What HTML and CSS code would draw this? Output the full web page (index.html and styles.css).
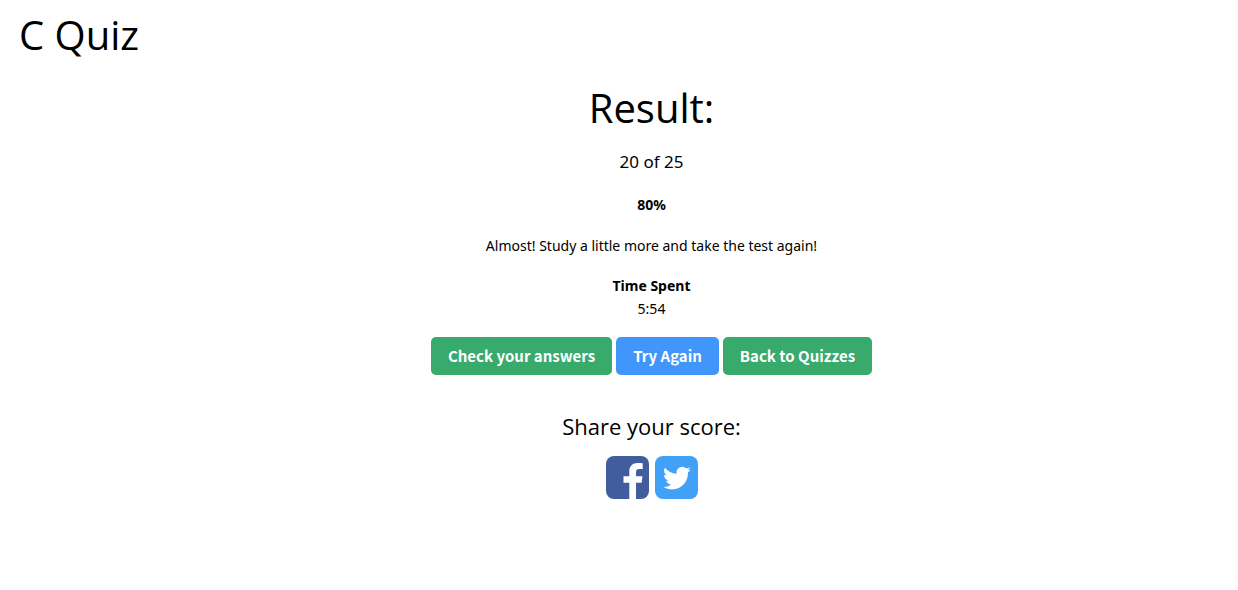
FILE: index.html
```html
<!DOCTYPE html>
<html lang="en">
<head>
<meta charset="utf-8">
<title>C Quiz</title>
<link rel="stylesheet" href="styles.css">
</head>
<body>
<h1 class="title">C Quiz</h1>
<main class="result">
  <h2 class="result-heading">Result:</h2>
  <p class="score">20 of 25</p>
  <p class="percent">80%</p>
  <p class="message">Almost! Study a little more and take the test again!</p>
  <p class="time"><strong>Time Spent</strong><br>5:54</p>
  <div class="actions">
    <button class="btn" type="button">Check your answers</button>
    <button class="btn btn-blue" type="button">Try Again</button>
    <button class="btn" type="button">Back to Quizzes</button>
  </div>
  <h3 class="share-heading">Share your score:</h3>
  <div class="share">
    <a href="#facebook" aria-label="Share on Facebook"><svg class="icon" viewBox="0 0 43 43"><rect width="43" height="43" rx="8" fill="#425d9d"/><path fill="#fff" d="M23.300 43V26.700H17.500V20.200H23.300V15.500C23.300 10 26.600 7 31.500 7C34 7 35.800 7.100 36.700 7.300V13H33.200C30.500 13 30 14.300 30 16.300V20.200H36.500L35.600 26.700H30V43Z"/></svg></a>
    <a href="#twitter" aria-label="Share on Twitter"><svg class="icon" viewBox="0 0 43 43"><rect width="43" height="43" rx="8" fill="#41a1f6"/><path fill="#fff" transform="translate(8 8.200) scale(1.160)" d="M23.953 4.570a10 10 0 0 1-2.825.775 4.958 4.958 0 0 0 2.163-2.723 9.900 9.900 0 0 1-3.127 1.184 4.920 4.920 0 0 0-8.384 4.482A13.940 13.940 0 0 1 1.640 3.162a4.920 4.920 0 0 0 1.523 6.574 4.900 4.900 0 0 1-2.229-.616v.06a4.923 4.923 0 0 0 3.946 4.827 5 5 0 0 1-2.212.085 4.936 4.936 0 0 0 4.604 3.417A9.870 9.870 0 0 1 0 19.540a13.940 13.940 0 0 0 7.548 2.212c9.142 0 14.307-7.721 13.995-14.646a10 10 0 0 0 2.410-2.536z"/></svg></a>
  </div>
</main>
</body>
</html>
```
FILE: styles.css
```css
body {
  margin: 0;
  padding: 3px 20px 20px 19px;
  background: #fff;
  color: #000;
  font-family: "Segoe UI", "Noto Sans", "Open Sans", sans-serif;
  font-size: 14px;
  line-height: 23px;
}
.title,
.result-heading {
  margin: 0;
  font-family: "Segoe UI", "Open Sans", "Noto Sans", sans-serif;
  font-size: 40px;
  font-weight: 400;
  line-height: 63px;
}
.result {
  padding: 10px 0 0 66px;
  text-align: center;
}
.score {
  margin: 10px 0 18px;
  font-size: 17px;
  line-height: 26px;
}
.percent {
  margin: 0 0 18px;
  font-weight: 700;
}
.message {
  margin: 0 0 17px;
}
.time {
  margin: 0 0 17px;
}
.actions {
  display: flex;
  flex-wrap: wrap;
  justify-content: center;
  gap: 4px;
}
.btn {
  padding: 7px 17px;
  border: 0;
  border-radius: 5px;
  background: #38aa6b;
  color: #fff;
  font-family: "Source Sans Pro", "Noto Sans CJK SC", sans-serif;
  font-size: 15px;
  font-weight: 700;
  line-height: 24px;
  cursor: pointer;
}
.btn-blue {
  background: #4096fa;
}
.share-heading {
  margin: 33px 0 12px;
  font-family: "Segoe UI", "Open Sans", "Noto Sans", sans-serif;
  font-size: 22px;
  font-weight: 400;
  line-height: 36px;
}
.share {
  display: flex;
  justify-content: center;
  gap: 6px;
}
.icon {
  display: block;
  width: 43px;
  height: 43px;
}
```
